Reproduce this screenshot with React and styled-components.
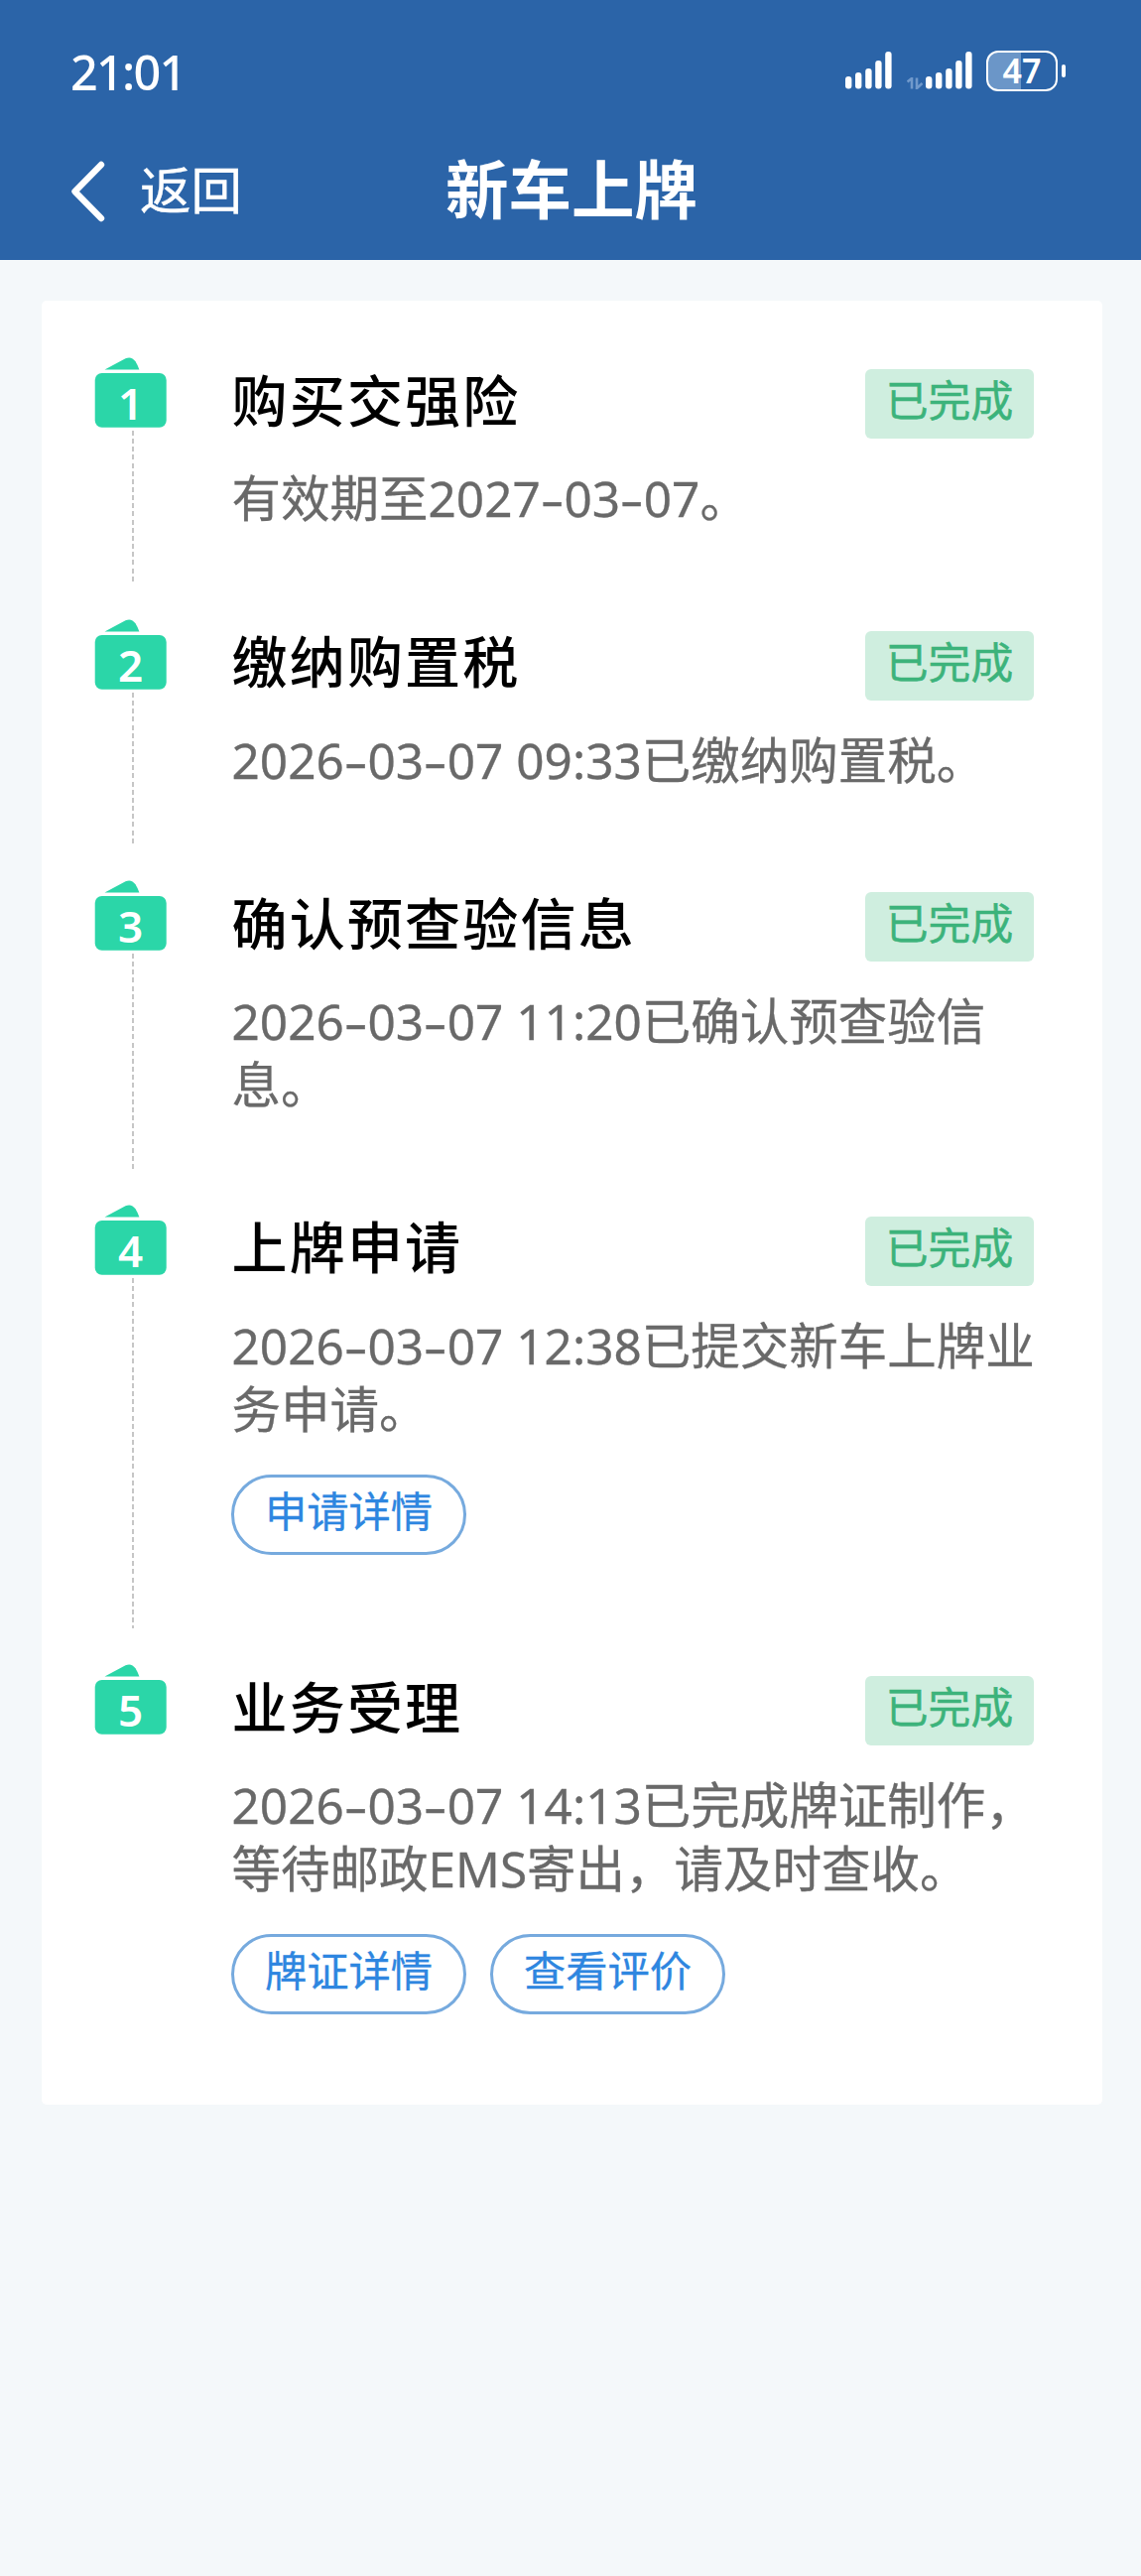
import React, { Fragment } from "react";
import styled, { createGlobalStyle } from "styled-components";

const GlobalStyle = createGlobalStyle`
  * { box-sizing: border-box; }
  body {
    margin: 0;
    background: #f4f8fa;
    font-family: "Noto Sans", "Noto Sans CJK SC", sans-serif;
  }
  button { font-family: inherit; }
`;

const Screen = styled.div`
  width: 1150px;
  min-height: 2596px;
  background: #f4f8fa;
`;

const Header = styled.header`
  height: 262px;
  background: #2b64a8;
  color: #fff;
`;

const StatusBar = styled.div`
  display: flex;
  justify-content: space-between;
  height: 130px;
  padding: 0 76px 0 71px;
`;

const Clock = styled.div`
  margin-top: 39px;
  height: 66px;
  line-height: 66px;
  font-size: 48.5px;
  font-weight: 500;
  letter-spacing: -1.7px;
`;

const StatusIcons = styled.div`
  display: flex;
  align-items: flex-start;
  padding-top: 51px;
`;

const SignalIcon = styled.svg`
  display: block;
  margin-top: 1px;
  margin-right: 15px;
`;

const ArrowsIcon = styled.svg`
  display: block;
  margin-top: 27px;
  margin-right: 3px;
`;

const Battery = styled.div`
  width: 72px;
  height: 41px;
  margin-left: -1px;
  border: 2px solid #fff;
  border-radius: 12px;
  background: linear-gradient(90deg, #6b96c8 0 49%, transparent 49%);
  font-size: 34px;
  font-weight: 600;
  line-height: 37px;
  text-align: center;
`;

const BatteryTip = styled.div`
  width: 4px;
  height: 13px;
  margin: 14px 0 0 4px;
  border-radius: 2px;
  background: #fff;
`;

const NavBar = styled.div`
  display: grid;
  grid-template-columns: 1fr auto 1fr;
  align-items: center;
  height: 126px;
  padding: 0 69px 0 71px;
`;

const BackButton = styled.button`
  display: flex;
  align-items: center;
  gap: 33px;
  padding: 0;
  border: 0;
  background: none;
  color: #fff;
  font-size: 51.5px;
  line-height: 70px;
  -webkit-text-stroke: 0.4px currentColor;
`;

const BackLabel = styled.span`
  padding-bottom: 4px;
`;

const PageTitle = styled.h1`
  margin: 0 0 5px;
  font-size: 63.5px;
  font-weight: 700;
  line-height: 80px;
`;

const Card = styled.main`
  margin: 41px 39px 0 42px;
  height: 1818px;
  padding: 57px 69px 0 53px;
  border-radius: 5px;
  background: #fff;
`;

const Step = styled.section`
  display: flex;
  height: ${(p) => p.$height}px;
`;

const Rail = styled.div`
  display: flex;
  flex-direction: column;
  width: 139px;
  flex: none;
`;

const Marker = styled.div`
  position: relative;
  width: 73px;
  height: 71px;
  flex: none;
  margin-bottom: 3px;
`;

const MarkerNumber = styled.span`
  position: absolute;
  inset: 17px 0 0 0;
  color: #fff;
  font-size: 44px;
  font-weight: 600;
  line-height: 58px;
  text-align: center;
`;

const Connector = styled.div`
  width: 2px;
  flex: 1;
  margin: 0 0 36px 37.5px;
  background: repeating-linear-gradient(#c6c6c6 0 5px, transparent 5px 8.15px);
`;

const Content = styled.div`
  flex: 1;
  min-width: 0;
`;

const StepHeader = styled.div`
  display: flex;
  justify-content: space-between;
  align-items: flex-start;
  height: 110px;
  padding-top: 12px;
`;

const StepTitle = styled.h2`
  margin: -1.5px 0 0 -0.5px;
  color: #000;
  font-size: 56px;
  font-weight: 500;
  letter-spacing: 2.2px;
  line-height: 64px;
`;

const Badge = styled.span`
  width: 170px;
  height: 70px;
  border-radius: 6px;
  background: #cfeedf;
  color: #3cb37b;
  font-size: 42.8px;
  line-height: 64px;
  text-align: center;
  -webkit-text-stroke: 0.5px currentColor;
`;

const Description = styled.p`
  margin: 0 0 0 -0.5px;
  color: #696969;
  font-size: 49.5px;
  line-height: 64px;
  white-space: nowrap;
  -webkit-text-stroke: 0.3px currentColor;
`;

const Hyphen = styled.span`
  display: inline-block;
  width: 23.7px;
  text-align: center;
  transform: scaleX(1.5);
`;

const Actions = styled.div`
  display: flex;
  gap: 25px;
  margin-top: 34px;
  margin-left: -1px;
`;

const PillButton = styled.button`
  width: 237px;
  height: 81px;
  padding: 0 0 7px;
  border: 3px solid #76aade;
  border-radius: 41px;
  background: #fff;
  color: #2e86e0;
  font-size: 42.3px;
  line-height: 68px;
  -webkit-text-stroke: 0.3px currentColor;

  & + & {
    margin-left: -1px;
  }
`;

const BARS = [
  [0, 25],
  [10, 21],
  [20.2, 17],
  [30.2, 9],
  [40.2, 0],
];

function Signal() {
  return (
    <SignalIcon width="47" height="38" viewBox="0 0 47 38" fill="#fff">
      {BARS.map(([x, y]) => (
        <rect key={x} x={x} y={y} width="6.4" height={37.5 - y} rx="3" />
      ))}
    </SignalIcon>
  );
}

function StepMarker({ number }) {
  return (
    <Marker>
      <svg width="73" height="71" viewBox="0 0 73 71" fill="#2bd6a8">
        <path d="M10.5 12.6 L31.5 1.2 Q37.5 -1.4 41.5 4.2 Q43.8 7.8 45.4 12.6 Z" />
        <rect x="0.7" y="16" width="72" height="54.7" rx="7" />
      </svg>
      <MarkerNumber>{number}</MarkerNumber>
    </Marker>
  );
}

function DateText({ children }) {
  return children.split("-").map((part, i) => (
    <Fragment key={i}>
      {i > 0 && <Hyphen>-</Hyphen>}
      {part}
    </Fragment>
  ));
}

const STEPS = [
  { title: "购买交强险", lines: ["有效期至2027-03-07。"], height: 263.5 },
  { title: "缴纳购置税", lines: ["2026-03-07 09:33已缴纳购置税。"], height: 263.5 },
  { title: "确认预查验信息", lines: ["2026-03-07 11:20已确认预查验信", "息。"], height: 326.5 },
  {
    title: "上牌申请",
    lines: ["2026-03-07 12:38已提交新车上牌业", "务申请。"],
    actions: ["申请详情"],
    height: 463.5,
  },
  {
    title: "业务受理",
    lines: ["2026-03-07 14:13已完成牌证制作，", "等待邮政EMS寄出，请及时查收。"],
    actions: ["牌证详情", "查看评价"],
    height: 400,
  },
];

export default function App() {
  return (
    <Screen>
      <GlobalStyle />
      <Header>
        <StatusBar>
          <Clock>21:01</Clock>
          <StatusIcons>
            <Signal />
            <ArrowsIcon width="16" height="12" viewBox="0 0 16 12" stroke="#7099cb" strokeWidth="2.6" fill="none">
              <path d="M0.5 4.5 L5 1 V11.5 M10 0.5 V11 L15.5 6" />
            </ArrowsIcon>
            <Signal />
            <Battery>47</Battery>
            <BatteryTip />
          </StatusIcons>
        </StatusBar>
        <NavBar>
          <BackButton>
            <svg width="37" height="62" viewBox="0 0 37 62" fill="none" stroke="#fff" strokeWidth="6.4" strokeLinecap="round" strokeLinejoin="round">
              <path d="M31 4 L4.5 31 L31 58" />
            </svg>
            <BackLabel>返回</BackLabel>
          </BackButton>
          <PageTitle>新车上牌</PageTitle>
        </NavBar>
      </Header>
      <Card>
        {STEPS.map((step, i) => (
          <Step key={step.title} $height={step.height}>
            <Rail>
              <StepMarker number={i + 1} />
              {i < STEPS.length - 1 && <Connector />}
            </Rail>
            <Content>
              <StepHeader>
                <StepTitle>{step.title}</StepTitle>
                <Badge>已完成</Badge>
              </StepHeader>
              <Description>
                {step.lines.map((line, n) => (
                  <Fragment key={line}>
                    {n > 0 && <br />}
                    <DateText>{line}</DateText>
                  </Fragment>
                ))}
              </Description>
              {step.actions && (
                <Actions>
                  {step.actions.map((label) => (
                    <PillButton key={label}>{label}</PillButton>
                  ))}
                </Actions>
              )}
            </Content>
          </Step>
        ))}
      </Card>
    </Screen>
  );
}
